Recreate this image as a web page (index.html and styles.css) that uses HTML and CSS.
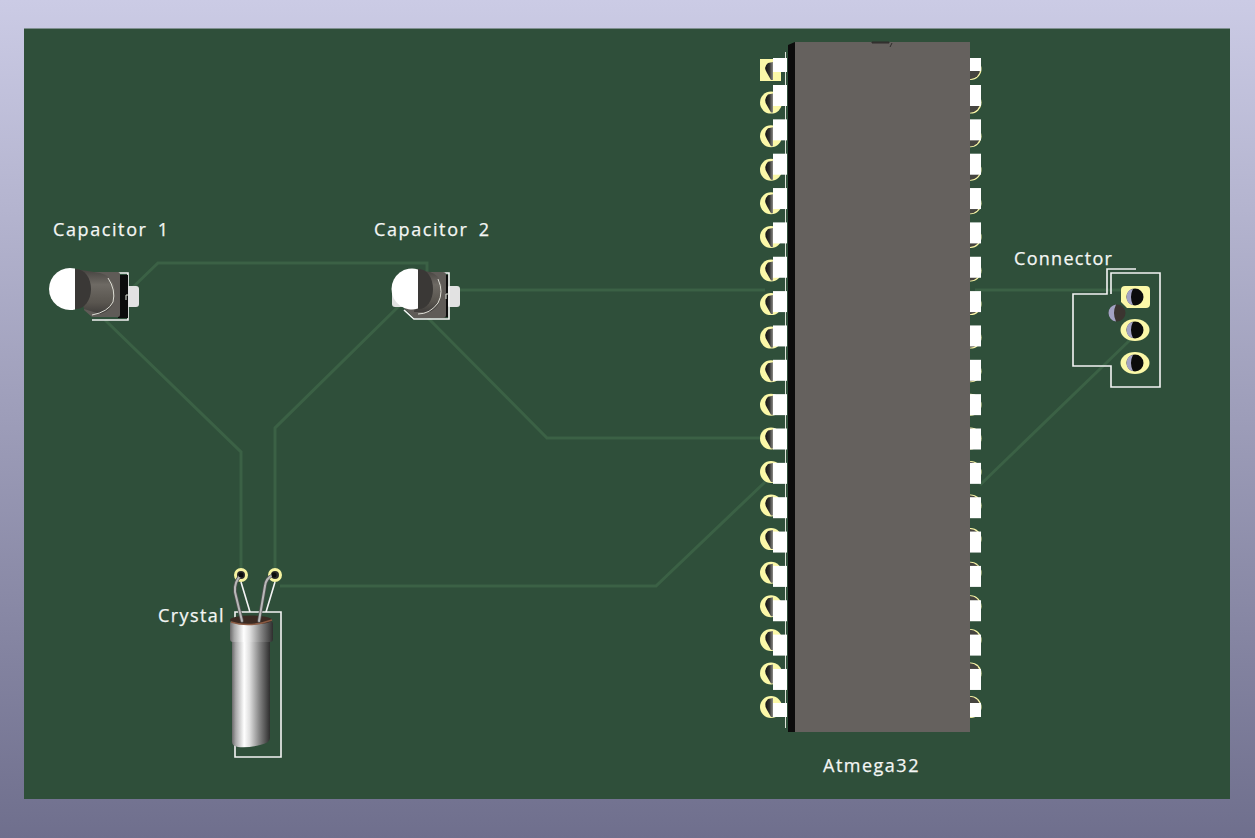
FILE: index.html
```html
<!DOCTYPE html>
<html lang="en">
<head>
<meta charset="utf-8">
<title>PCB 3D view</title>
<link rel="stylesheet" href="styles.css">
</head>
<body>
<main class="board">
<svg class="pcb" viewBox="24 29 1206 770" width="1206" height="770" xmlns="http://www.w3.org/2000/svg">
  <defs>
    <linearGradient id="capBody" x1="0" y1="0" x2="0" y2="1">
      <stop offset="0" stop-color="#44413e"/><stop offset=".35" stop-color="#6e6a64"/><stop offset=".75" stop-color="#59554f"/><stop offset="1" stop-color="#3f3c3a"/>
    </linearGradient>
    <linearGradient id="can" x1="0" y1="0" x2="1" y2="0">
      <stop offset="0" stop-color="#6a6a6a"/><stop offset=".1" stop-color="#a8a8a8"/><stop offset=".32" stop-color="#ffffff"/><stop offset=".46" stop-color="#e0e0e0"/><stop offset=".72" stop-color="#858585"/><stop offset="1" stop-color="#2e2e2e"/>
    </linearGradient>
    <linearGradient id="drillShade" x1="0" y1="0" x2="1" y2="0">
      <stop offset="0" stop-color="#141414"/><stop offset=".55" stop-color="#333331"/><stop offset="1" stop-color="#8a8a85"/>
    </linearGradient>
    <g id="padL">
      <circle cx="771" cy="0" r="11" class="pad"/>
      <path d="M773-9L773 10L771 10L767 3Q763-3 768-8Z" fill="url(#drillShade)"/>
    </g>
    <g id="padR">
      <circle cx="970.500" cy="0" r="11" class="pad"/>
      <circle cx="970" cy="0" r="10.200" class="drillR"/>
    </g>
  </defs>

  <g class="traces">
    <path d="M130 290L158 263H427V275"/>
    <path d="M105 320L241 452V575"/>
    <path d="M400 305L275 428V575"/>
    <path d="M428 318L547 438H765"/>
    <path d="M460 290H765"/>
    <path d="M280 586H656L765 482"/>
    <path d="M975 290H1125"/>
    <path d="M980 485L1130 340"/>
  </g>

  <!-- capacitor 1 -->
  <path d="M93 273H128V320H92" class="silk"/>
  <rect x="125" y="286" width="14" height="21" rx="3" class="capPad"/>
  <rect x="118" y="275" width="10" height="43" class="black"/>
  <path d="M88 272H118Q120 272 120 275V315Q120 317 118 317H92L84 310Z" fill="#5f5b57"/>
  <path d="M75 269L100 273Q115 277 115 294Q115 310 100 314L84 309Z" fill="url(#capBody)"/>
  <path d="M108 278Q116 290 113 302Q108 312 92 315" class="capRing"/>
  <ellipse cx="76" cy="289" rx="15" ry="20" fill="#3a3836"/>
  <path d="M75 268.600A21 21 0 1 0 75 309.400Z" class="white"/>
  <path d="M129 295H126V300" class="silkThin"/>

  <!-- capacitor 2 -->
  <rect x="392" y="286" width="14" height="21" rx="3" class="capPad"/>
  <rect x="447" y="286" width="13" height="21" rx="3" class="capPad"/>
  <path d="M427 273H449V319H414L404 310" class="silk"/>
  <rect x="445" y="275" width="3" height="42" class="black"/>
  <path d="M418 272H443Q446 272 446 275V315Q446 318 443 318H414L404 308Z" fill="#5f5b57"/>
  <path d="M418 270L430 272Q442 276 442 291Q442 306 430 312L414 312Z" fill="url(#capBody)"/>
  <path d="M438 279Q444 292 438 303Q430 314 418 314" class="capRing"/>
  <ellipse cx="419" cy="289" rx="14" ry="20" fill="#3a3836"/>
  <path d="M418 269.400A20.500 20.500 0 1 0 418 308.600Z" class="white"/>
  <path d="M449 294H446V299" class="silkThin"/>

  <!-- crystal -->
  <path d="M235 618V612H281V757H235V745M250 612L241 582M266 612L275 582" class="silk"/>
  <circle cx="241" cy="575" r="5.500" class="ring"/>
  <circle cx="275" cy="575" r="5.500" class="ring"/>
  <path d="M232 640H270V738Q270 743 260 745Q248 748 238 747Q232 746 232 742Z" fill="url(#can)"/>
  <rect x="230" y="621" width="43" height="21" rx="3" fill="url(#can)"/>
  <ellipse cx="251" cy="620" rx="21" ry="4.500" fill="#3b2a22"/>
  <path d="M231 622Q250 628 272 620" class="capRim"/>
  <path d="M241 575Q234 582 235 592L242 621" class="leadEdge"/>
  <path d="M273 575Q266 578 265 586L259 621" class="leadEdge"/>
  <path d="M241 575Q234 582 235 592L242 621" class="lead"/>
  <path d="M273 575Q266 578 265 586L259 621" class="lead"/>
  <circle cx="241" cy="575" r="2.500" class="hole"/>
  <circle cx="274" cy="575" r="2.500" class="hole"/>

  <!-- IC pads -->
  <rect x="760" y="59" width="21" height="22" class="pad"/>
  <path d="M773 62L773 80L771 80L767 73Q763 67 768 63Z" fill="url(#drillShade)"/>
  <use href="#padL" y="102.600"/><use href="#padL" y="136.200"/><use href="#padL" y="169.700"/><use href="#padL" y="203.300"/>
  <use href="#padL" y="236.900"/><use href="#padL" y="270.500"/><use href="#padL" y="304.100"/><use href="#padL" y="337.600"/>
  <use href="#padL" y="371.200"/><use href="#padL" y="404.800"/><use href="#padL" y="438.400"/><use href="#padL" y="472"/>
  <use href="#padL" y="505.500"/><use href="#padL" y="539.100"/><use href="#padL" y="572.700"/><use href="#padL" y="606.300"/>
  <use href="#padL" y="639.900"/><use href="#padL" y="673.400"/><use href="#padL" y="707"/>
  <use href="#padR" y="69"/><use href="#padR" y="102.600"/><use href="#padR" y="136.200"/><use href="#padR" y="169.700"/>
  <use href="#padR" y="203.300"/><use href="#padR" y="236.900"/><use href="#padR" y="270.500"/><use href="#padR" y="304.100"/>
  <use href="#padR" y="337.600"/><use href="#padR" y="371.200"/><use href="#padR" y="404.800"/><use href="#padR" y="438.400"/>
  <use href="#padR" y="472"/><use href="#padR" y="505.500"/><use href="#padR" y="539.100"/><use href="#padR" y="572.700"/>
  <use href="#padR" y="606.300"/><use href="#padR" y="639.900"/><use href="#padR" y="673.400"/><use href="#padR" y="707"/>

  <path d="M785.500 52V728" class="silkThin"/>

  <!-- IC legs -->
  <g class="legL">
    <rect x="773" y="58" width="14" height="14"/>
    <rect x="773" y="85" width="14" height="21"/><rect x="773" y="119.350" width="14" height="21"/><rect x="773" y="153.700" width="14" height="21"/>
    <rect x="773" y="188.050" width="14" height="21"/><rect x="773" y="222.400" width="14" height="21"/><rect x="773" y="256.750" width="14" height="21"/>
    <rect x="773" y="291.100" width="14" height="21"/><rect x="773" y="325.450" width="14" height="21"/><rect x="773" y="359.800" width="14" height="21"/>
    <rect x="773" y="394.150" width="14" height="21"/><rect x="773" y="428.500" width="14" height="21"/><rect x="773" y="462.850" width="14" height="21"/>
    <rect x="773" y="497.200" width="14" height="21"/><rect x="773" y="531.550" width="14" height="21"/><rect x="773" y="565.900" width="14" height="21"/>
    <rect x="773" y="600.250" width="14" height="21"/><rect x="773" y="634.600" width="14" height="21"/><rect x="773" y="668.950" width="14" height="21"/>
    <rect x="773" y="703" width="14" height="14"/>
  </g>
  <g class="legR">
    <rect x="969" y="58" width="12" height="13"/>
    <rect x="969" y="85" width="12" height="21"/><rect x="969" y="119.350" width="12" height="21"/><rect x="969" y="153.700" width="12" height="21"/>
    <rect x="969" y="188.050" width="12" height="21"/><rect x="969" y="222.400" width="12" height="21"/><rect x="969" y="256.750" width="12" height="21"/>
    <rect x="969" y="291.100" width="12" height="21"/><rect x="969" y="325.450" width="12" height="21"/><rect x="969" y="359.800" width="12" height="21"/>
    <rect x="969" y="394.150" width="12" height="21"/><rect x="969" y="428.500" width="12" height="21"/><rect x="969" y="462.850" width="12" height="21"/>
    <rect x="969" y="497.200" width="12" height="21"/><rect x="969" y="531.550" width="12" height="21"/><rect x="969" y="565.900" width="12" height="21"/>
    <rect x="969" y="600.250" width="12" height="21"/><rect x="969" y="634.600" width="12" height="21"/><rect x="969" y="668.950" width="12" height="21"/>
    <rect x="969" y="703" width="12" height="14"/>
  </g>

  <!-- IC body -->
  <path d="M788 45L795 42V732H788Z" class="black"/>
  <rect x="795" y="42" width="175" height="690" fill="#65615e"/>
  <path d="M872 42H889V43H872ZM892 43L890 47" class="notch"/>

  <!-- connector -->
  <path d="M1136 269H1107V294H1073V366H1111V387H1160V273H1111V294" class="silk"/>
  <path d="M1125 286H1146Q1150 286 1150 290V304Q1150 308 1146 308H1127L1121 302V290Q1121 286 1125 286Z" class="pad"/>
  <ellipse cx="1135" cy="330" rx="14.500" ry="11" class="pad"/>
  <ellipse cx="1135" cy="363" rx="14.500" ry="11" class="pad"/>
  <circle cx="1135" cy="297" r="8.500" class="hole"/><path d="M1133 288.740A8.500 8.500 0 0 0 1133 305.260Q1129 297 1133 288.740Z" class="lilac"/>
  <circle cx="1135" cy="330" r="8.500" class="hole"/><path d="M1133 321.740A8.500 8.500 0 0 0 1133 338.260Q1129 330 1133 321.740Z" class="lilac"/>
  <circle cx="1135" cy="363" r="8.500" class="hole"/><path d="M1133 354.740A8.500 8.500 0 0 0 1133 371.260Q1129 363 1133 354.740Z" class="lilac"/>
  <circle cx="1117" cy="313" r="8.500" fill="#3b3530"/>
  <path d="M1116 304.560A8.500 8.500 0 0 0 1116 321.440Q1112 313 1116 304.560Z" class="lilac"/>

  <!-- labels -->
  <text x="53" y="236" class="label labelCap">Capacitor 1</text>
  <text x="374" y="236" class="label labelCap">Capacitor 2</text>
  <text x="158" y="622" class="label labelCrystal">Crystal</text>
  <text x="1014" y="265" class="label labelConn">Connector</text>
  <text x="823" y="772" class="label labelChip">Atmega32</text>
</svg>
</main>
</body>
</html>
```

FILE: styles.css
```css
html, body {
  margin: 0;
  height: 838px;
  overflow: hidden;
}
body {
  box-sizing: border-box;
  padding: 29px 25px 39px 24px;
  background: linear-gradient(180deg, #cbcbe5 0%, #6f6f8d 100%);
}
.board {
  width: 1206px;
  height: 770px;
  background: #2f4f3a;
  box-shadow: 0 -1px 0 #7f8f90;
}
.pcb {
  display: block;
}
.traces path {
  fill: none;
  stroke: #3b6145;
  stroke-width: 3;
}
.silk {
  fill: none;
  stroke: #f4f4f4;
  stroke-width: 1.600;
}
.silkThin {
  fill: none;
  stroke: #dfe3da;
  stroke-width: 1;
}
.pad {
  fill: #fbf8a8;
}
.white {
  fill: #ffffff;
}
.drillR {
  fill: #45443f;
}
.black {
  fill: #0c0c0c;
}
.legL,
.legR {
  fill: #ffffff;
}
.notch {
  fill: #3f3d3a;
  stroke: #2e2c2a;
  stroke-width: 1;
}
.capPad {
  fill: #e2e2e2;
}
.capRing {
  fill: none;
  stroke: #dcdcd4;
  stroke-width: 1;
}
.ring {
  fill: #2b2b2b;
  stroke: #f6f3a0;
  stroke-width: 3;
}
.hole {
  fill: #0b0b0b;
}
.lilac {
  fill: #a3a3c4;
}
.leadEdge {
  fill: none;
  stroke: #555555;
  stroke-width: 3.500;
  stroke-linecap: round;
}
.lead {
  fill: none;
  stroke: #b8b8b8;
  stroke-width: 2;
  stroke-linecap: round;
}
.capRim {
  fill: none;
  stroke: #8a5a42;
  stroke-width: 1.500;
}
.label {
  fill: #f4f6f4;
  stroke: #f4f6f4;
  stroke-width: 0.250;
  font-family: "Open Sans", sans-serif;
  font-size: 18px;
  letter-spacing: 1.600px;
}
.labelCap {
  word-spacing: 4px;
}
.labelConn {
  letter-spacing: 1.300px;
}
.labelCrystal {
  letter-spacing: 1.400px;
}
.labelChip {
  letter-spacing: 1.500px;
}
```
